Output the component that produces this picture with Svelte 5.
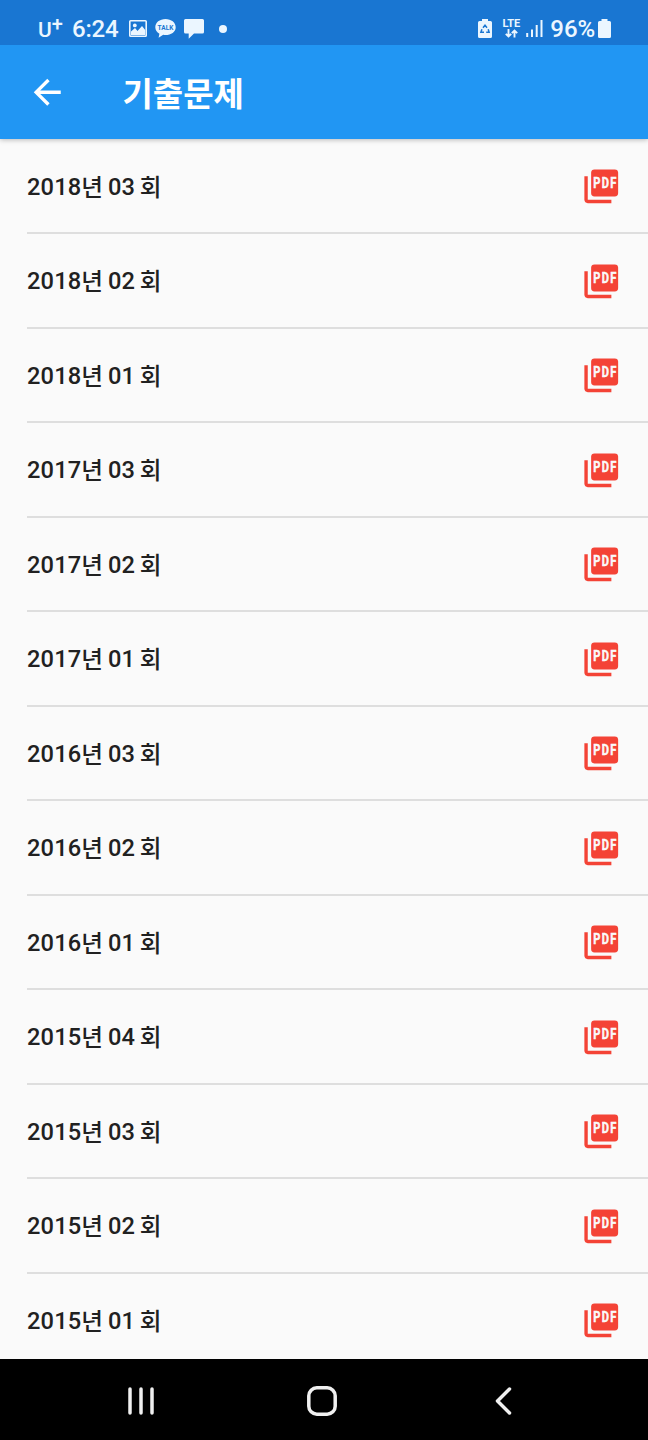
<script lang="ts">
  type Exam = { year: number; round: string }

  const exams: Exam[] = [
    { year: 2018, round: '03' },
    { year: 2018, round: '02' },
    { year: 2018, round: '01' },
    { year: 2017, round: '03' },
    { year: 2017, round: '02' },
    { year: 2017, round: '01' },
    { year: 2016, round: '03' },
    { year: 2016, round: '02' },
    { year: 2016, round: '01' },
    { year: 2015, round: '04' },
    { year: 2015, round: '03' },
    { year: 2015, round: '02' },
    { year: 2015, round: '01' },
  ]
</script>

<div class="screen">
  <div class="status-bar">
    <div class="status-left">
      <span class="carrier">U<sup>+</sup></span>
      <span class="clock">6:24</span>
      <svg class="picture" width="18" height="17" viewBox="0 0 18 17">
        <rect x="0.8" y="0.8" width="16.4" height="15.4" rx="0.8" fill="none" stroke="currentColor" stroke-width="1.6" />
        <circle cx="5.8" cy="5.4" r="1.9" fill="currentColor" />
        <path d="M2 15v-3.5L6 8l2.5 3L13 6l3.2 4v5H2z" fill="currentColor" />
      </svg>
      <svg class="talk" width="21" height="19" viewBox="0 0 21 19">
        <path d="M10.5 0C4.7 0 .3 3.6.3 8.2c0 2.8 1.6 5.2 4.1 6.6l-.8 4 4.6-3c6.6 1 12.5-2.3 12.5-7.6C20.7 3.6 16.3 0 10.5 0z" fill="currentColor" />
        <text x="2.6" y="10.8" textLength="15.8" lengthAdjust="spacingAndGlyphs">TALK</text>
      </svg>
      <svg class="bubble" width="20" height="20" viewBox="0 0 20 20">
        <path d="M1.5 0h17A1.5 1.5 0 0 1 20 1.5V13a1.5 1.5 0 0 1-1.5 1.5H10l-5.3 5.2v-5.2H1.5A1.5 1.5 0 0 1 0 13V1.5A1.5 1.5 0 0 1 1.5 0z" fill="currentColor" />
      </svg>
      <span class="dot"></span>
    </div>
    <div class="status-right">
      <svg class="saver" width="14" height="19" viewBox="0 0 14 19">
        <path d="M4 0h6v2h2.5A1.5 1.5 0 0 1 14 3.5v14a1.5 1.5 0 0 1-1.5 1.5h-11A1.5 1.5 0 0 1 0 17.5v-14A1.5 1.5 0 0 1 1.5 2H4z" fill="currentColor" />
        <path d="M5 8.7 7 6.2l2 2.5M10.2 10.3l.9 2.9H8.2M6 13.2H2.9l1-2.9" fill="none" stroke="#1976d2" stroke-width="1.5" />
      </svg>
      <span class="network">
        <span>LTE</span>
        <svg width="13" height="9" viewBox="0 0 13 9">
          <path d="M3.5 0v7M.8 4.8l2.7 2.7 2.7-2.7M9.5 8.5v-7M6.8 4.2l2.7-2.7 2.7 2.7" fill="none" stroke="currentColor" stroke-width="1.9" />
        </svg>
      </span>
      <svg class="signal" width="17" height="17" viewBox="0 0 17 17">
        <path d="M1.2 13v4M6 9.5V17M10.7 5v12M15.5 0v17" stroke="currentColor" stroke-width="2" />
      </svg>
      <span class="percent">96%</span>
      <svg class="battery" width="13" height="19" viewBox="0 0 13 19">
        <path d="M3.5 0h6v2h2A1.5 1.5 0 0 1 13 3.5v14a1.5 1.5 0 0 1-1.5 1.5h-10A1.5 1.5 0 0 1 0 17.5v-14A1.5 1.5 0 0 1 1.5 2h2z" fill="currentColor" />
      </svg>
    </div>
  </div>

  <header class="app-bar">
    <button type="button" class="back" aria-label="뒤로">
      <svg viewBox="0 0 24 24">
        <path d="M20 11H7.83l5.59-5.59L12 4l-8 8 8 8 1.41-1.41L7.83 13H20v-2z" fill="currentColor" />
      </svg>
    </button>
    <h1>기출문제</h1>
  </header>

  <ul class="exam-list">
    {#each exams as exam}
      <li>
        <span class="title">{exam.year}<span class="unit">년</span> {exam.round} <span class="unit">회</span></span>
        <svg class="pdf" viewBox="0 0 24 24">
          <rect x="6" y="2" width="16" height="16" rx="2" />
          <path d="M4 6H2v14c0 1.1.9 2 2 2h14v-2H4V6z" />
          <text transform="scale(0.8 1)" x="9 15.3 21.6" y="13">PDF</text>
        </svg>
      </li>
    {/each}
  </ul>

  <nav class="nav-bar">
    <button type="button" aria-label="최근 앱">
      <svg width="28" height="30" viewBox="0 0 28 30">
        <path d="M3 3v24M14 3v24M25 3v24" />
      </svg>
    </button>
    <button type="button" aria-label="홈">
      <svg width="32" height="32" viewBox="0 0 32 32">
        <rect x="2.8" y="2.8" width="26.4" height="26.4" rx="8" />
      </svg>
    </button>
    <button type="button" aria-label="뒤로">
      <svg width="20" height="30" viewBox="0 0 20 30">
        <path d="M16.5 3l-12 12 12 12" />
      </svg>
    </button>
  </nav>
</div>

<style>
  :global(body) {
    margin: 0;
    background: #fafafa;
  }

  .screen {
    display: flex;
    flex-direction: column;
    width: 648px;
    height: 1440px;
    overflow: hidden;
    background: #fafafa;
    font-family: Roboto, 'Noto Sans CJK KR', sans-serif;
  }

  .status-bar {
    z-index: 2;
    display: flex;
    flex: none;
    justify-content: space-between;
    box-sizing: border-box;
    height: 45px;
    padding: 12px 37px 0 38px;
    background: #1976d2;
    color: #ebf6ff;
  }

  .status-left,
  .status-right {
    display: flex;
    align-items: center;
    height: 33px;
  }

  .carrier {
    width: 34px;
    padding-top: 4px;
    font-size: 21px;
    font-weight: 500;
    line-height: 33px;
  }

  .carrier sup {
    font-size: 20px;
    font-weight: 500;
    line-height: 0;
    vertical-align: 6px;
  }

  .clock {
    width: 57px;
    font-size: 24px;
    font-weight: 500;
    letter-spacing: -0.2px;
  }

  .talk {
    margin-left: 8px;
  }

  .talk text {
    fill: #1976d2;
    font-size: 7px;
    font-weight: 700;
  }

  .bubble {
    margin-left: 8px;
  }

  .dot {
    width: 8px;
    height: 8px;
    margin-left: 15px;
    border-radius: 50%;
    background: currentColor;
  }

  .network {
    display: flex;
    flex-direction: column;
    align-items: center;
    width: 20px;
    margin-left: 9px;
    font-size: 11px;
    font-weight: 700;
    line-height: 10px;
  }

  .signal {
    margin-left: 5px;
  }

  .percent {
    margin-left: 7px;
    font-size: 24px;
    font-weight: 500;
    letter-spacing: -0.1px;
  }

  .battery {
    margin-left: 3px;
  }

  .app-bar {
    z-index: 1;
    display: flex;
    flex: none;
    align-items: center;
    height: 94px;
    background: #2196f3;
    color: #fff;
    box-shadow: 0 1px 5px rgba(0, 0, 0, 0.26);
  }

  .back {
    display: flex;
    justify-content: center;
    width: 94.5px;
    padding: 0;
    border: 0;
    background: none;
    color: inherit;
  }

  .back svg {
    width: 40.5px;
    height: 40.5px;
  }

  h1 {
    margin: 0 0 0 28px;
    padding-top: 4px;
    font-size: 33px;
    font-weight: 700;
    line-height: 1;
  }

  .exam-list {
    flex: 1;
    min-height: 0;
    margin: 0;
    padding: 0.5px 0 0;
    overflow: hidden;
    list-style: none;
  }

  li {
    display: flex;
    align-items: center;
    justify-content: space-between;
    box-sizing: border-box;
    height: 94.5px;
    margin-left: 27px;
    padding: 2px 27px 0 0;
    border-bottom: 2px solid #dedede;
    color: #212121;
  }

  .title {
    font-size: 23.625px;
    font-weight: 500;
    letter-spacing: 0.17px;
    word-spacing: -1.4px;
  }

  .unit {
    line-height: 1;
    vertical-align: -1px;
  }

  .pdf {
    width: 40.5px;
    height: 40.5px;
    margin-bottom: 1px;
    fill: #f44336;
  }

  .pdf text {
    fill: #fafafa;
    stroke: #fafafa;
    stroke-width: 0.3;
    font-size: 8.2px;
    font-weight: 700;
  }

  .nav-bar {
    display: flex;
    flex: none;
    align-items: center;
    justify-content: center;
    height: 81px;
    background: #000;
  }

  .nav-bar button {
    display: flex;
    align-items: center;
    justify-content: center;
    width: 181px;
    height: 81px;
    padding: 3px 5px 0 0;
    border: 0;
    background: none;
  }

  .nav-bar svg {
    fill: none;
    stroke: #f0f0f0;
    stroke-width: 3.5;
    stroke-linecap: round;
    stroke-linejoin: round;
  }
</style>
